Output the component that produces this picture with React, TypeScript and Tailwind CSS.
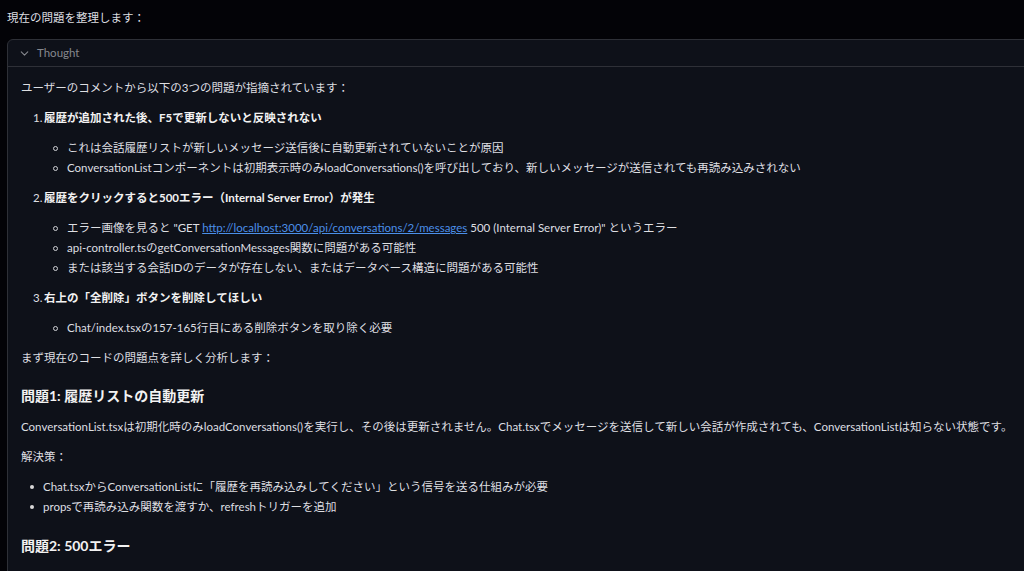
import { ChevronDown } from "lucide-react";

const font = { fontFamily: 'Lato, "Noto Sans CJK JP", sans-serif' };

function Sub({ children }: { children: React.ReactNode }) {
  return (
    <li className="flex items-center h-5 pl-[32px]">
      <span className="w-[5px] h-[5px] rounded-full border border-[#cfd0d4] mr-[9px]"></span>
      <span>{children}</span>
    </li>
  );
}

function Item({ n, title, children }: { n: number; title: string; children: React.ReactNode }) {
  return (
    <li className="mt-[10px]">
      <div className="flex items-center h-5 pl-[12px]">
        <span className="w-[11px]">{n}.</span>
        <span className="font-bold text-[#f2f2f2]">{title}</span>
      </div>
      <ul className="mt-[10px]">{children}</ul>
    </li>
  );
}

function Bullet({ children }: { children: React.ReactNode }) {
  return (
    <li className="flex items-center h-5 pl-[9px]">
      <span className="w-[4px] h-[4px] rounded-full bg-[#d8d8d8] mr-[9px]"></span>
      <span>{children}</span>
    </li>
  );
}

export default function App() {
  return (
    <div
      className="w-[1024px] h-[571px] overflow-hidden bg-[#030307] text-[11.5px] leading-5 text-[#dedfe2] pl-[7px] pt-2"
      style={font}
    >
      <p className="h-5">現在の問題を整理します：</p>
      <div className="mt-[11px] mr-[-20px] border border-[#2e3037] rounded-md bg-[#0e1119] h-[600px]">
        <div className="h-[27px] border-b border-[#2e3037] flex items-center pl-[10px] gap-[6px] text-[#86888e]">
          <ChevronDown size={13} strokeWidth={2} />
          <span>Thought</span>
        </div>
        <div className="pl-[13px] pt-[11px]">
          <p className="h-5">ユーザーのコメントから以下の3つの問題が指摘されています：</p>
          <ol>
            <Item n={1} title="履歴が追加された後、F5で更新しないと反映されない">
              <Sub>これは会話履歴リストが新しいメッセージ送信後に自動更新されていないことが原因</Sub>
              <Sub>
                ConversationListコンポーネントは初期表示時のみloadConversations()を呼び出しており、新しいメッセージが送信されても再読み込みされない
              </Sub>
            </Item>
            <Item n={2} title="履歴をクリックすると500エラー（Internal Server Error）が発生">
              <Sub>
                エラー画像を見ると "GET{" "}
                <a className="text-[#4b8fe8] underline">http://localhost:3000/api/conversations/2/messages</a>{" "}
                500 (Internal Server Error)" というエラー
              </Sub>
              <Sub>api-controller.tsのgetConversationMessages関数に問題がある可能性</Sub>
              <Sub>または該当する会話IDのデータが存在しない、またはデータベース構造に問題がある可能性</Sub>
            </Item>
            <Item n={3} title="右上の「全削除」ボタンを削除してほしい">
              <Sub>Chat/index.tsxの157-165行目にある削除ボタンを取り除く必要</Sub>
            </Item>
          </ol>
          <p className="h-5 mt-[10px]">まず現在のコードの問題点を詳しく分析します：</p>
          <h3 className="mt-4 text-[14px] leading-6 font-bold text-[#f2f2f2]">問題1: 履歴リストの自動更新</h3>
          <p className="h-5 mt-[9px] whitespace-nowrap">
            ConversationList.tsxは初期化時のみloadConversations()を実行し、その後は更新されません。Chat.tsxでメッセージを送信して新しい会話が作成されても、ConversationListは知らない状態です。
          </p>
          <p className="h-5 mt-[10px]">解決策：</p>
          <ul className="mt-[10px]">
            <Bullet>Chat.tsxからConversationListに「履歴を再読み込みしてください」という信号を送る仕組みが必要</Bullet>
            <Bullet>propsで再読み込み関数を渡すか、refreshトリガーを追加</Bullet>
          </ul>
          <h3 className="mt-[17px] text-[14px] leading-6 font-bold text-[#f2f2f2]">問題2: 500エラー</h3>
        </div>
      </div>
    </div>
  );
}
